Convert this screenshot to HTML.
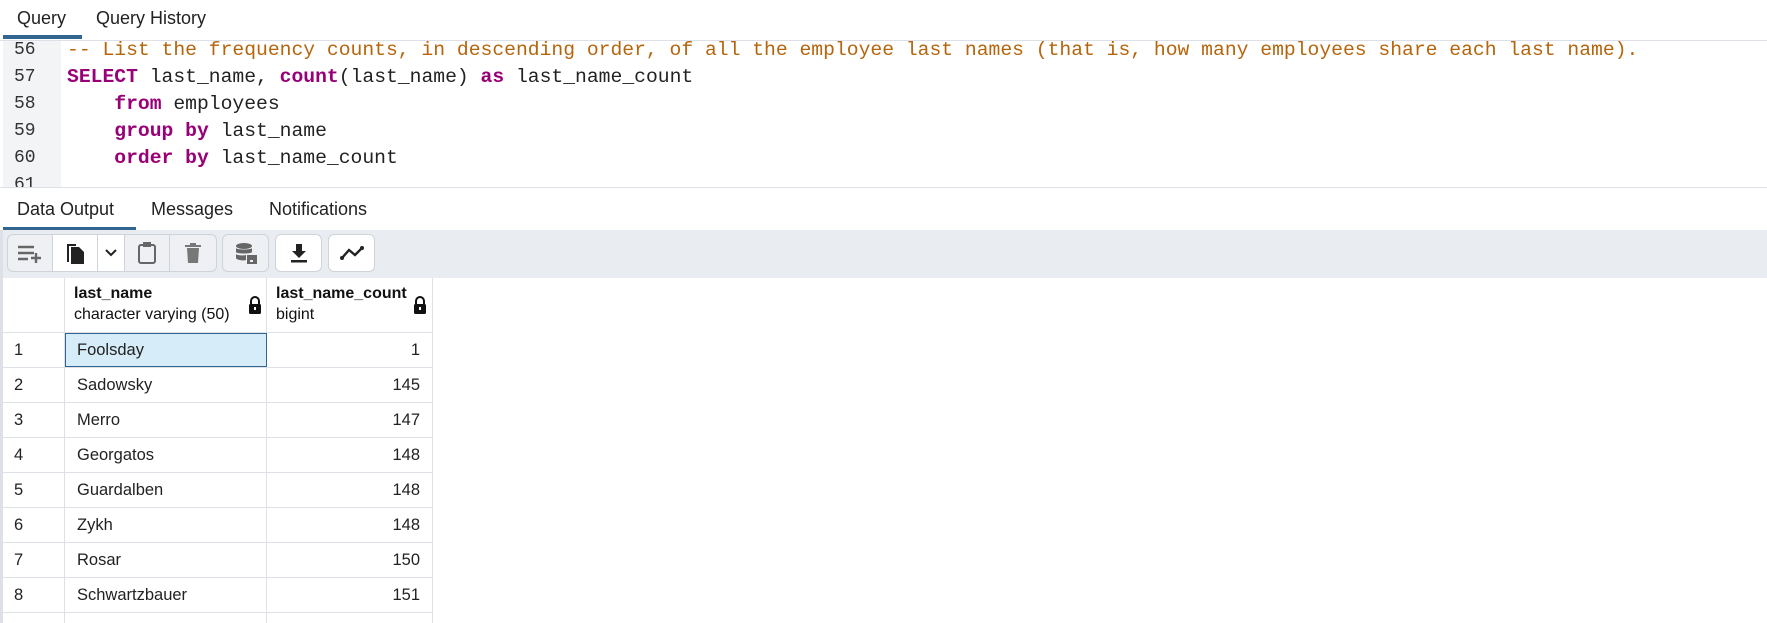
<!DOCTYPE html>
<html><head><meta charset="utf-8"><style>
*{box-sizing:border-box;margin:0;padding:0}
html{width:1767px;height:623px;overflow:hidden}
body{width:1767px;height:623px;overflow:hidden;background:#fff;font-family:"Liberation Sans",sans-serif;color:#222;position:relative}
.abs{position:absolute}
.tab{position:absolute;font-size:18px;color:#222}
.code{position:absolute;left:67px;font-family:"Liberation Mono",monospace;font-size:19.7px;white-space:pre;color:#222;line-height:27px}
.ln{position:absolute;left:14px;font-family:"Liberation Mono",monospace;font-size:18px;color:#333;line-height:27px}
.kw{color:#990077;font-weight:bold}
.cm{color:#b5650c}
.btn{position:absolute;top:234px;height:38px;border:1px solid #cfd4da;background:#fff;display:flex;align-items:center;justify-content:center}
.dis{background:#eef0f3}
.row{position:absolute;left:3px;width:429px;height:35px;border-bottom:1px solid #dde0e6;font-size:16.5px}
.row div{position:absolute;top:0;height:34px;line-height:34px}
</style></head><body>
<div class="tab" style="left:17px;top:8px">Query</div>
<div class="tab" style="left:96px;top:8px">Query History</div>
<div class="abs" style="left:3px;top:35px;width:79px;height:4px;background:#326690"></div>
<div class="abs" style="left:0;top:40px;width:1767px;height:1px;background:#dde0e6"></div>
<div class="abs" style="left:3px;top:41px;width:58px;height:146px;background:#f3f4f6"></div>
<div class="ln" style="top:37px">56<br>57<br>58<br>59<br>60<br>61</div>
<div class="code" style="top:37px"><span class="cm">-- List the frequency counts, in descending order, of all the employee last names (that is, how many employees share each last name).</span>
<span class="kw">SELECT</span> last_name, <span class="kw">count</span>(last_name) <span class="kw">as</span> last_name_count
    <span class="kw">from</span> employees
    <span class="kw">group by</span> last_name
    <span class="kw">order by</span> last_name_count</div>
<div class="abs" style="left:0;top:187px;width:1767px;height:36px;background:#fff"></div>
<div class="abs" style="left:0;top:187px;width:1767px;height:1px;background:#dde0e6"></div>
<div class="tab" style="left:17px;top:199px">Data Output</div>
<div class="tab" style="left:151px;top:199px">Messages</div>
<div class="tab" style="left:269px;top:199px">Notifications</div>
<div class="abs" style="left:3px;top:227px;width:133px;height:4px;background:#326690"></div>
<div class="abs" style="left:0;top:230px;width:1767px;height:48px;background:#e9ecf0"></div>
<div class="abs" style="left:0;top:230px;width:3px;height:393px;background:#dde0e6"></div>
<div class="btn dis" style="left:7px;width:46px;border-radius:6px 0 0 6px"><svg width="28" height="20" viewBox="0 0 28 20"><g stroke="#666" stroke-width="2.4" fill="none"><path d="M2 4h16M2 10h16M2 16h10M15 15h10M20 10v10"/></g></svg></div>
<div class="btn" style="left:52px;width:46px"><svg width="22" height="24" viewBox="0 0 22 24"><path d="M3 3h9v2H5v16H3z" fill="#222"/><path d="M7 6h8l5 5v12H7z" fill="#222"/></svg></div>
<div class="btn" style="left:97px;width:28px"><svg width="14" height="10" viewBox="0 0 14 10"><path d="M2 2l5 5 5-5" stroke="#222" stroke-width="2" fill="none"/></svg></div>
<div class="btn dis" style="left:124px;width:46px"><svg width="20" height="24" viewBox="0 0 20 24"><rect x="2" y="4" width="16" height="18" rx="2" stroke="#666" stroke-width="2" fill="none"/><rect x="6" y="1" width="8" height="5" fill="#666"/></svg></div>
<div class="btn dis" style="left:169px;width:48px;border-radius:0 6px 6px 0"><svg width="18" height="22" viewBox="0 0 18 22"><path d="M1 3h16v2H1zM6 1h6v2H6zM3 6h12l-1 15H4z" fill="#777"/></svg></div>
<div class="btn dis" style="left:222px;width:47px;border-radius:6px"><svg width="24" height="24" viewBox="0 0 24 24"><ellipse cx="10" cy="5" rx="8" ry="3" fill="#666"/><path d="M2 7v4c0 2 16 2 16 0V7c0 2-16 2-16 0zM2 13v4c0 2 8 3 10 2v-5c-4 1-10 0-10-1z" fill="#666"/><rect x="13" y="14" width="10" height="9" fill="#666"/><rect x="16" y="19" width="3" height="2" fill="#eee"/></svg></div>
<div class="btn" style="left:275px;width:47px;border-radius:6px"><svg width="20" height="20" viewBox="0 0 20 20"><path d="M7 1h6v7h4l-7 7-7-7h4z" fill="#222"/><rect x="2" y="17" width="16" height="2.5" fill="#222"/></svg></div>
<div class="btn" style="left:328px;width:47px;border-radius:6px"><svg width="26" height="16" viewBox="0 0 26 16"><path d="M3 13l7-8 6 5 7-7" stroke="#222" stroke-width="2.4" fill="none"/><circle cx="3" cy="13" r="2" fill="#222"/><circle cx="23" cy="3" r="2" fill="#222"/></svg></div>
<div class="abs" style="left:3px;top:278px;width:429px;height:55px;border-bottom:1px solid #dde0e6"></div>
<div class="abs" style="left:64px;top:278px;width:1px;height:345px;background:#dde0e6"></div>
<div class="abs" style="left:266px;top:278px;width:1px;height:345px;background:#dde0e6"></div>
<div class="abs" style="left:432px;top:278px;width:1px;height:345px;background:#dde0e6"></div>
<div class="abs" style="left:74px;top:285px;font-size:16px;font-weight:bold;color:#111">last_name</div>
<div class="abs" style="left:74px;top:306px;font-size:16px;color:#111">character varying (50)</div>
<div class="abs" style="left:276px;top:285px;font-size:16px;font-weight:bold;color:#111">last_name_count</div>
<div class="abs" style="left:276px;top:306px;font-size:16px;color:#111">bigint</div>
<svg class="abs" style="left:248px;top:296px" width="14" height="18" viewBox="0 0 14 18"><path d="M3 8V5a4 4 0 0 1 8 0v3" stroke="#111" stroke-width="2" fill="none"/><rect x="1" y="8" width="12" height="10" rx="1.5" fill="#111"/><rect x="6" y="11" width="2" height="3" fill="#fff"/></svg>
<svg class="abs" style="left:413px;top:296px" width="14" height="18" viewBox="0 0 14 18"><path d="M3 8V5a4 4 0 0 1 8 0v3" stroke="#111" stroke-width="2" fill="none"/><rect x="1" y="8" width="12" height="10" rx="1.5" fill="#111"/><rect x="6" y="11" width="2" height="3" fill="#fff"/></svg>
<div class="abs" style="left:65px;top:333px;width:202px;height:34px;background:#d6ecf8;border:1px solid #326690"></div>
<div class="row" style="top:333px"><div style="left:11px">1</div><div style="left:74px">Foolsday</div><div style="right:12px">1</div></div>
<div class="row" style="top:368px"><div style="left:11px">2</div><div style="left:74px">Sadowsky</div><div style="right:12px">145</div></div>
<div class="row" style="top:403px"><div style="left:11px">3</div><div style="left:74px">Merro</div><div style="right:12px">147</div></div>
<div class="row" style="top:438px"><div style="left:11px">4</div><div style="left:74px">Georgatos</div><div style="right:12px">148</div></div>
<div class="row" style="top:473px"><div style="left:11px">5</div><div style="left:74px">Guardalben</div><div style="right:12px">148</div></div>
<div class="row" style="top:508px"><div style="left:11px">6</div><div style="left:74px">Zykh</div><div style="right:12px">148</div></div>
<div class="row" style="top:543px"><div style="left:11px">7</div><div style="left:74px">Rosar</div><div style="right:12px">150</div></div>
<div class="row" style="top:578px"><div style="left:11px">8</div><div style="left:74px">Schwartzbauer</div><div style="right:12px">151</div></div>
<div class="row" style="top:613px"><div style="left:11px">9</div><div style="left:74px">Bellis</div><div style="right:12px">151</div></div>
</body></html>
